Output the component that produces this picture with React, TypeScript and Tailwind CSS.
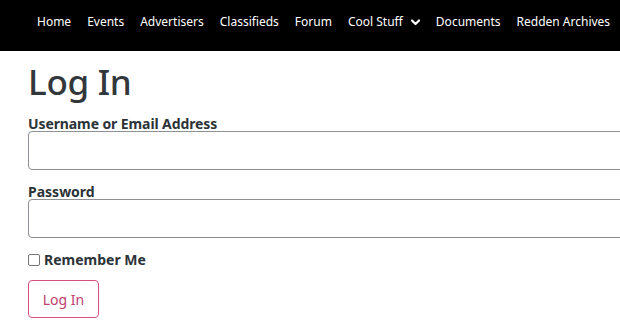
import React from "react";

const items = ["Home", "Events", "Advertisers", "Classifieds", "Forum"];
const items2 = ["Documents", "Redden Archives"];

export default function App() {
  return (
    <div className="w-[620px] h-[329px] overflow-hidden bg-white" style={{ fontFamily: '"Noto Sans", "Open Sans", sans-serif' }}>
      <nav className="h-[51px] bg-black flex items-center pl-[37px] gap-[16px] text-white text-[12px] whitespace-nowrap pb-[8px]">
        {items.map((t) => (
          <span key={t}>{t}</span>
        ))}
        <span className="flex items-center gap-[8px]">
          Cool Stuff
          <svg width="9" height="7" viewBox="0 0 9 7" className="mt-[1px]">
            <path d="M1 1.5 L4.5 5 L8 1.5" stroke="white" strokeWidth="2.2" fill="none" strokeLinecap="round" strokeLinejoin="round" />
          </svg>
        </span>
        {items2.map((t) => (
          <span key={t}>{t}</span>
        ))}
      </nav>
      <div className="pl-[28px] text-[#32373c]">
        <h1 className="text-[35px] font-medium leading-none mt-[13px] tracking-[-0.3px]">Log In</h1>
        <form className="mt-[17px]">
          <label className="block text-[14px] font-bold leading-[15px] text-[#2c3338] tracking-[-0.1px]">Username or Email Address</label>
          <input type="text" className="block w-[640px] h-[39px] border border-[#8c8f94] rounded-[4px]" />
          <label className="block text-[14px] font-bold leading-[15px] text-[#2c3338] mt-[14px]">Password</label>
          <input type="password" className="block w-[640px] h-[39px] border border-[#8c8f94] rounded-[4px]" />
          <label className="flex items-center gap-[4px] mt-[14px] text-[14px] font-bold leading-[16px] text-[#2c3338]">
            <input type="checkbox" className="w-[12px] h-[12px] m-0 appearance-none border border-[#767676] rounded-[2px] bg-white" />
            Remember Me
          </label>
          <button type="button" className="mt-[12px] w-[71px] h-[38px] border border-[#d6507f] rounded-[4px] text-[#c0406e] text-[14px] bg-white">
            Log In
          </button>
        </form>
      </div>
    </div>
  );
}
